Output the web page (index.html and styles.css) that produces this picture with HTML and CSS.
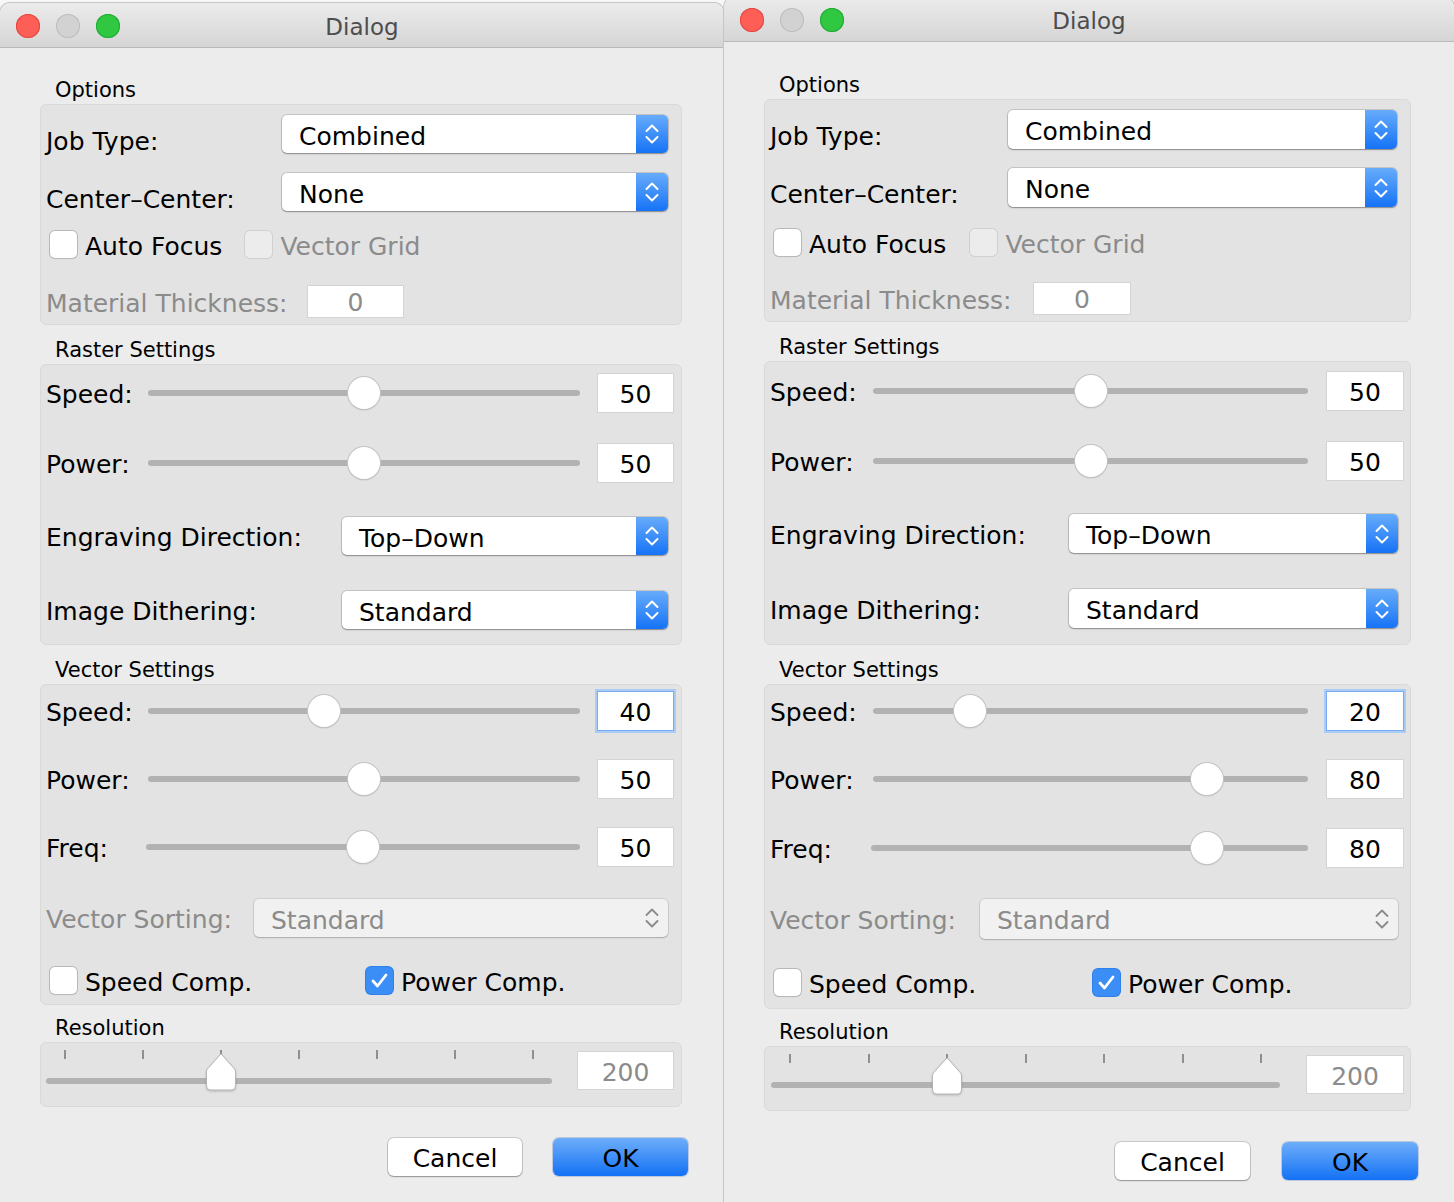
FILE: index.html
```html
<!DOCTYPE html>
<html>
<head>
<meta charset="utf-8">
<title>Dialog</title>
<link rel="stylesheet" href="styles.css">
</head>
<body>
<div class="desk">

  <!-- LEFT DIALOG -->
  <div class="win win-a">
    <div class="titlebar">
      <div class="lights"><span class="light red"></span><span class="light gray"></span><span class="light green"></span></div>
      <div class="title">Dialog</div>
      <div></div>
    </div>
    <div class="content">
      <div class="gtitle">Options</div>
      <div class="panel p-options">
        <div class="row r-combo"><span class="lbl lw-job lbl-low">Job Type:</span><div class="combo"><span class="ctext">Combined</span><span class="carrow"><svg width="16" height="26" viewBox="0 0 16 26"><path d="M2.5 10 L8 4.5 L13.5 10 M2.5 16 L8 21.5 L13.5 16" fill="none" stroke="#fff" stroke-width="2" stroke-linecap="round" stroke-linejoin="round"/></svg></span></div></div>
        <div class="row r-combo r2"><span class="lbl lw-job lbl-low">Center–Center:</span><div class="combo"><span class="ctext">None</span><span class="carrow"><svg width="16" height="26" viewBox="0 0 16 26"><path d="M2.5 10 L8 4.5 L13.5 10 M2.5 16 L8 21.5 L13.5 16" fill="none" stroke="#fff" stroke-width="2" stroke-linecap="round" stroke-linejoin="round"/></svg></span></div></div>
        <div class="row r-check r3"><span class="cb"></span><span class="cblbl">Auto Focus</span><span class="cb dis cb-gap"></span><span class="cblbl dim">Vector Grid</span></div>
        <div class="row r-mat"><span class="lbl lw-mat dim">Material Thickness:</span><div class="field f-mat dim">0</div></div>
      </div>

      <div class="gtitle gt">Raster Settings</div>
      <div class="panel p-raster">
        <div class="row r-slider"><span class="lbl lw-sl">Speed:</span><div class="slider"><div class="track"></div><div class="thumb" style="left: calc((100% - 32px) * 0.50)"></div></div><div class="field">50</div></div>
        <div class="row r-slider rs2"><span class="lbl lw-sl">Power:</span><div class="slider"><div class="track"></div><div class="thumb" style="left: calc((100% - 32px) * 0.50)"></div></div><div class="field">50</div></div>
        <div class="row r-combo rs3"><span class="lbl lw-eng">Engraving Direction:</span><div class="combo"><span class="ctext">Top–Down</span><span class="carrow"><svg width="16" height="26" viewBox="0 0 16 26"><path d="M2.5 10 L8 4.5 L13.5 10 M2.5 16 L8 21.5 L13.5 16" fill="none" stroke="#fff" stroke-width="2" stroke-linecap="round" stroke-linejoin="round"/></svg></span></div></div>
        <div class="row r-combo rs4"><span class="lbl lw-eng">Image Dithering:</span><div class="combo"><span class="ctext">Standard</span><span class="carrow"><svg width="16" height="26" viewBox="0 0 16 26"><path d="M2.5 10 L8 4.5 L13.5 10 M2.5 16 L8 21.5 L13.5 16" fill="none" stroke="#fff" stroke-width="2" stroke-linecap="round" stroke-linejoin="round"/></svg></span></div></div>
      </div>

      <div class="gtitle gt">Vector Settings</div>
      <div class="panel p-vector">
        <div class="row r-slider rv1"><span class="lbl lw-sl">Speed:</span><div class="slider"><div class="track"></div><div class="thumb" style="left: calc((100% - 32px) * 0.40)"></div></div><div class="field focus">40</div></div>
        <div class="row r-slider rv2"><span class="lbl lw-sl">Power:</span><div class="slider"><div class="track"></div><div class="thumb" style="left: calc((100% - 32px) * 0.50)"></div></div><div class="field">50</div></div>
        <div class="row r-slider rv3"><span class="lbl lw-fq">Freq:</span><div class="slider"><div class="track"></div><div class="thumb" style="left: calc((100% - 32px) * 0.50)"></div></div><div class="field">50</div></div>
        <div class="row r-combo rv4"><span class="lbl lw-vs dim">Vector Sorting:</span><div class="combo dis"><span class="ctext">Standard</span><span class="carrow"><svg width="16" height="26" viewBox="0 0 16 26"><path d="M2.5 10 L8 4.5 L13.5 10 M2.5 16 L8 21.5 L13.5 16" fill="none" stroke="#8a8a8a" stroke-width="1.8" stroke-linecap="round" stroke-linejoin="round"/></svg></span></div></div>
        <div class="row r-check rv5"><div class="chk-item"><span class="cb"></span><span class="cblbl">Speed Comp.</span></div><span class="cb on"><svg width="27" height="27" viewBox="0 0 27 27"><path d="M7 14 L11.5 19 L20 8" fill="none" stroke="#fff" stroke-width="2.8" stroke-linecap="round" stroke-linejoin="round"/></svg></span><span class="cblbl">Power Comp.</span></div>
      </div>

      <div class="gtitle gt gt-res">Resolution</div>
      <div class="panel p-res">
        <div class="res-slider">
          <div class="ticks"><span class="tick"></span><span class="tick"></span><span class="tick"></span><span class="tick"></span><span class="tick"></span><span class="tick"></span><span class="tick"></span></div>
          <div class="track res-track"></div>
          <svg class="pthumb" style="left: calc(19px + (100% - 38px) * 0.3333 - 15px)" width="30" height="38" viewBox="0 0 30 38"><path d="M15 0.8 L28.6 16 Q29.5 17 29.5 19 L29.5 33 Q29.5 37 25.5 37 L4.5 37 Q0.5 37 0.5 33 L0.5 19 Q0.5 17 1.4 16 Z" fill="#fff" stroke="#b5b5b5" stroke-width="1"/></svg>
        </div>
        <div class="field f-res dim">200</div>
      </div>

      <div class="buttons">
        <div class="btn btn-cancel">Cancel</div>
        <div class="btn btn-ok">OK</div>
      </div>
    </div>
  </div>

  <!-- RIGHT DIALOG -->
  <div class="win win-b">
    <div class="titlebar">
      <div class="lights"><span class="light red"></span><span class="light gray"></span><span class="light green"></span></div>
      <div class="title">Dialog</div>
      <div></div>
    </div>
    <div class="content">
      <div class="gtitle">Options</div>
      <div class="panel p-options">
        <div class="row r-combo"><span class="lbl lw-job lbl-low">Job Type:</span><div class="combo"><span class="ctext">Combined</span><span class="carrow"><svg width="16" height="26" viewBox="0 0 16 26"><path d="M2.5 10 L8 4.5 L13.5 10 M2.5 16 L8 21.5 L13.5 16" fill="none" stroke="#fff" stroke-width="2" stroke-linecap="round" stroke-linejoin="round"/></svg></span></div></div>
        <div class="row r-combo r2"><span class="lbl lw-job lbl-low">Center–Center:</span><div class="combo"><span class="ctext">None</span><span class="carrow"><svg width="16" height="26" viewBox="0 0 16 26"><path d="M2.5 10 L8 4.5 L13.5 10 M2.5 16 L8 21.5 L13.5 16" fill="none" stroke="#fff" stroke-width="2" stroke-linecap="round" stroke-linejoin="round"/></svg></span></div></div>
        <div class="row r-check r3"><span class="cb"></span><span class="cblbl">Auto Focus</span><span class="cb dis cb-gap"></span><span class="cblbl dim">Vector Grid</span></div>
        <div class="row r-mat"><span class="lbl lw-mat dim">Material Thickness:</span><div class="field f-mat dim">0</div></div>
      </div>

      <div class="gtitle gt">Raster Settings</div>
      <div class="panel p-raster">
        <div class="row r-slider"><span class="lbl lw-sl">Speed:</span><div class="slider"><div class="track"></div><div class="thumb" style="left: calc((100% - 32px) * 0.50)"></div></div><div class="field">50</div></div>
        <div class="row r-slider rs2"><span class="lbl lw-sl">Power:</span><div class="slider"><div class="track"></div><div class="thumb" style="left: calc((100% - 32px) * 0.50)"></div></div><div class="field">50</div></div>
        <div class="row r-combo rs3"><span class="lbl lw-eng">Engraving Direction:</span><div class="combo"><span class="ctext">Top–Down</span><span class="carrow"><svg width="16" height="26" viewBox="0 0 16 26"><path d="M2.5 10 L8 4.5 L13.5 10 M2.5 16 L8 21.5 L13.5 16" fill="none" stroke="#fff" stroke-width="2" stroke-linecap="round" stroke-linejoin="round"/></svg></span></div></div>
        <div class="row r-combo rs4"><span class="lbl lw-eng">Image Dithering:</span><div class="combo"><span class="ctext">Standard</span><span class="carrow"><svg width="16" height="26" viewBox="0 0 16 26"><path d="M2.5 10 L8 4.5 L13.5 10 M2.5 16 L8 21.5 L13.5 16" fill="none" stroke="#fff" stroke-width="2" stroke-linecap="round" stroke-linejoin="round"/></svg></span></div></div>
      </div>

      <div class="gtitle gt gt-vec">Vector Settings</div>
      <div class="panel p-vector">
        <div class="row r-slider rv1"><span class="lbl lw-sl">Speed:</span><div class="slider"><div class="track"></div><div class="thumb" style="left: calc((100% - 32px) * 0.20)"></div></div><div class="field focus">20</div></div>
        <div class="row r-slider rv2"><span class="lbl lw-sl">Power:</span><div class="slider"><div class="track"></div><div class="thumb" style="left: calc((100% - 32px) * 0.79)"></div></div><div class="field">80</div></div>
        <div class="row r-slider rv3"><span class="lbl lw-fq">Freq:</span><div class="slider"><div class="track"></div><div class="thumb" style="left: calc((100% - 32px) * 0.79)"></div></div><div class="field">80</div></div>
        <div class="row r-combo rv4"><span class="lbl lw-vs dim">Vector Sorting:</span><div class="combo dis"><span class="ctext">Standard</span><span class="carrow"><svg width="16" height="26" viewBox="0 0 16 26"><path d="M2.5 10 L8 4.5 L13.5 10 M2.5 16 L8 21.5 L13.5 16" fill="none" stroke="#8a8a8a" stroke-width="1.8" stroke-linecap="round" stroke-linejoin="round"/></svg></span></div></div>
        <div class="row r-check rv5"><div class="chk-item"><span class="cb"></span><span class="cblbl">Speed Comp.</span></div><span class="cb on"><svg width="27" height="27" viewBox="0 0 27 27"><path d="M7 14 L11.5 19 L20 8" fill="none" stroke="#fff" stroke-width="2.8" stroke-linecap="round" stroke-linejoin="round"/></svg></span><span class="cblbl">Power Comp.</span></div>
      </div>

      <div class="gtitle gt gt-res">Resolution</div>
      <div class="panel p-res">
        <div class="res-slider">
          <div class="ticks"><span class="tick"></span><span class="tick"></span><span class="tick"></span><span class="tick"></span><span class="tick"></span><span class="tick"></span><span class="tick"></span></div>
          <div class="track res-track"></div>
          <svg class="pthumb" style="left: calc(19px + (100% - 38px) * 0.3333 - 15px)" width="30" height="38" viewBox="0 0 30 38"><path d="M15 0.8 L28.6 16 Q29.5 17 29.5 19 L29.5 33 Q29.5 37 25.5 37 L4.5 37 Q0.5 37 0.5 33 L0.5 19 Q0.5 17 1.4 16 Z" fill="#fff" stroke="#b5b5b5" stroke-width="1"/></svg>
        </div>
        <div class="field f-res dim">200</div>
      </div>

      <div class="buttons">
        <div class="btn btn-cancel">Cancel</div>
        <div class="btn btn-ok">OK</div>
      </div>
    </div>
  </div>

</div>
</body>
</html>
```

FILE: styles.css
```css
* { box-sizing: border-box; margin: 0; padding: 0; }

body {
  margin: 0;
  background: #f7f7f7;
  font-family: "DejaVu Sans", "Liberation Sans", sans-serif;
  color: #000;
  overflow: hidden;
}

.desk {
  display: flex;
  align-items: flex-start;
  width: 1454px;
  height: 1202px;
  overflow: hidden;
}

.win {
  background: #ececec;
  border-radius: 10px 10px 0 0;
  height: 1215px;
  display: flex;
  flex-direction: column;
  box-shadow: 0 0 0 1px #c6c6c6;
  flex: none;
}
.win-a { width: 724px; margin-top: 3px; }
.win-b { width: 730px; margin-top: -3px; }

/* title bar */
.titlebar {
  height: 45px;
  background: linear-gradient(#ebebeb, #d5d5d5);
  border-bottom: 1px solid #b9b9b9;
  border-radius: 10px 10px 0 0;
  display: grid;
  grid-template-columns: 1fr auto 1fr;
  align-items: center;
  flex: none;
}
.lights { display: flex; gap: 16px; padding-left: 16px; padding-top: 1px; }
.light { width: 24px; height: 24px; border-radius: 50%; display: block; }
.red { background: #fd5f57; box-shadow: inset 0 0 0 1px #e1463f; }
.gray { background: #d2d2d2; box-shadow: inset 0 0 0 1px #bdbdbd; }
.green { background: #2fc840; box-shadow: inset 0 0 0 1px #21a934; }
.title { font-size: 23px; color: #4d4d4d; padding-top: 4px; }

/* content */
.content { padding: 28px 42px 0 40px; }
.win-b .content { padding: 29px 43px 0 40px; }

.gtitle {
  height: 28px;
  line-height: 28px;
  font-size: 21px;
  padding-left: 15px;
}
.gt { margin-top: 11px; }
.gt-res { margin-top: 9px; }
.win-b .gt-vec { margin-top: 11px; }

.panel {
  background: #e3e3e3;
  border: 1px solid #d9d9d9;
  border-radius: 6px;
}

.row { display: flex; align-items: center; }
.lbl { font-size: 25px; white-space: nowrap; flex: none; padding-top: 3px; }
.dim { color: #8b8b8b; }
.lbl-low { padding-top: 14px; }

/* options */
.p-options { padding: 10px 13px 6px 5px; }
.r-combo { height: 38px; }
.win-b .r-combo { height: 39px; }
.r2 { margin-top: 20px; }
.win-b .r2 { margin-top: 19px; }
.r3 { margin-top: 19px; height: 28px; }
.win-b .r3 { margin-top: 21px; }
.r-mat { margin-top: 27px; height: 33px; }
.win-b .r-mat { margin-top: 26px; }
.lw-job { width: 236px; }
.win-b .lw-job { width: 238px; }
.lw-mat { width: 261px; }
.win-b .lw-mat { width: 263px; }
.lw-eng { width: 296px; }
.win-b .lw-eng { width: 299px; }
.lw-vs { width: 208px; }
.win-b .lw-vs { width: 210px; }
.lw-sl { width: 102px; }
.lw-fq { width: 100px; }
.win-b .lw-sl { width: 103px; }
.win-b .lw-fq { width: 101px; }

/* combo box */
.combo {
  flex: 1;
  height: 100%;
  display: flex;
  background: #fff;
  border-radius: 5px;
  box-shadow: 0 0 0 1px rgba(0, 0, 0, 0.13), 0 1px 1.5px rgba(0, 0, 0, 0.3);
}
.p-raster .combo { margin-right: 6px; }
.p-vector .combo { margin-right: 8px; }
.ctext {
  flex: 1;
  padding-left: 17px;
  padding-top: 3px;
  font-size: 25px;
  line-height: 38px;
  white-space: nowrap;
}
.carrow {
  width: 32px;
  flex: none;
  background: linear-gradient(#67acfb, #1673f6);
  border-radius: 0 5px 5px 0;
  display: flex;
  align-items: center;
  justify-content: center;
}
.carrow svg { display: block; }
.combo.dis { background: #f1f1f1; box-shadow: 0 0 0 1px rgba(0, 0, 0, 0.08), 0 1px 1.5px rgba(0, 0, 0, 0.18); }
.combo.dis .ctext { color: #8b8b8b; }
.combo.dis .carrow { background: none; }

/* checkboxes */
.cb {
  width: 27px;
  height: 27px;
  flex: none;
  background: #fff;
  border-radius: 5px;
  box-shadow: 0 0 0 1px #b8b8b8, 0 1px 1px rgba(0, 0, 0, 0.12);
  margin-left: 4px;
  display: block;
}
.cb svg { display: block; }
.cb.dis { background: #ececec; box-shadow: 0 0 0 1px #d0d0d0; }
.cb.on { background: #3b8ef6; box-shadow: 0 0 0 1px #2f80ea; margin-left: 0; }
.cb-gap { margin-left: 23px; }
.win-b .cb-gap { margin-left: 24px; }
.cblbl { font-size: 25px; margin-left: 8px; white-space: nowrap; padding-top: 4px; }
.chk-item { display: flex; align-items: center; width: 320px; flex: none; }
.win-b .chk-item { width: 323px; }

/* text fields */
.field {
  width: 77px;
  height: 40px;
  flex: none;
  background: #fff;
  border: 1px solid #d4d4d4;
  font-size: 25px;
  line-height: 41px;
  text-align: center;
}
.win-b .field { width: 78px; }
.field.focus { border-color: #7aaaf0; box-shadow: 0 0 0 2px #a9cbf4; }
.f-mat { width: 97px; height: 33px; line-height: 33px; }
.win-b .f-mat { width: 98px; }
.f-res { width: 97px; height: 39px; line-height: 41px; margin-left: 25px; margin-top: 8px; }
.win-b .f-res { width: 98px; margin-left: 26px; }

/* sliders */
.p-raster { padding: 7px 7px 15px 5px; }
.win-b .p-raster { padding: 8px 6px 16px 5px; }
.r-slider { height: 41px; }
.rs2 { margin-top: 29px; }
.rs3 { margin-top: 34px; }
.rs4 { margin-top: 36px; }
.win-b .rs3 { margin-top: 33px; }

.slider {
  flex: 1;
  position: relative;
  height: 32px;
  display: flex;
  align-items: center;
  margin-right: 17px;
}
.win-b .slider { margin-right: 18px; }
.track {
  flex: 1;
  height: 6px;
  border-radius: 3px;
  background: #b2b2b2;
}
.thumb {
  position: absolute;
  top: 0;
  width: 32px;
  height: 32px;
  border-radius: 50%;
  background: #fff;
  box-shadow: 0 0 0 1px #c3c3c3, 0 1px 1.5px rgba(0, 0, 0, 0.25);
}

.p-vector { padding: 4px 5px 10px 5px; }
.win-b .p-vector { padding: 4px 4px 12px 5px; }
.rv1 { height: 44px; }
.rv2 { margin-top: 26px; height: 40px; }
.rv3 { margin-top: 28px; height: 40px; }
.rv4 { margin-top: 32px; height: 38px; }
.rv5 { margin-top: 29px; height: 28px; }
.win-b .rv3 { margin-top: 28px; height: 41px; }
.win-b .rv4 { margin-top: 31px; height: 40px; }
.win-b .rv5 { margin-top: 29px; }
.p-vector .r-slider .field { margin-right: 2px; }

/* resolution */
.p-res {
  height: 65px;
  display: flex;
  align-items: flex-start;
  padding: 0 7px 0 5px;
}
.win-b .p-res { padding: 0 6px 0 6px; }
.res-slider { flex: 1; position: relative; height: 63px; }
.ticks {
  display: flex;
  justify-content: space-between;
  padding: 0 18px;
  margin-top: 7px;
  height: 8px;
}
.tick { width: 2px; height: 9px; background: #8f8f8f; display: block; }
.res-track { margin-top: 20px; height: 6px; }
.pthumb { position: absolute; top: 10px; display: block; filter: drop-shadow(0 1px 0.8px rgba(0, 0, 0, 0.18)); }

/* buttons */
.buttons {
  display: flex;
  justify-content: flex-end;
  gap: 31px;
  margin-top: 31px;
  margin-right: -6px;
}
.win-b .buttons { margin-right: -7px; gap: 32px; }
.btn {
  height: 38px;
  border-radius: 6px;
  font-size: 25px;
  display: flex;
  align-items: center;
  justify-content: center;
  padding-top: 3px;
}
.btn-cancel {
  width: 134px;
  background: #fff;
  box-shadow: 0 0 0 1px rgba(0, 0, 0, 0.14), 0 1px 1.5px rgba(0, 0, 0, 0.28);
}
.btn-ok {
  width: 135px;
  background: linear-gradient(#6eaefa, #1371f5);
  box-shadow: 0 0 0 1px rgba(0, 60, 160, 0.2);
}
.win-b .btn-cancel { width: 135px; }
.win-b .btn-ok { width: 136px; }
```
